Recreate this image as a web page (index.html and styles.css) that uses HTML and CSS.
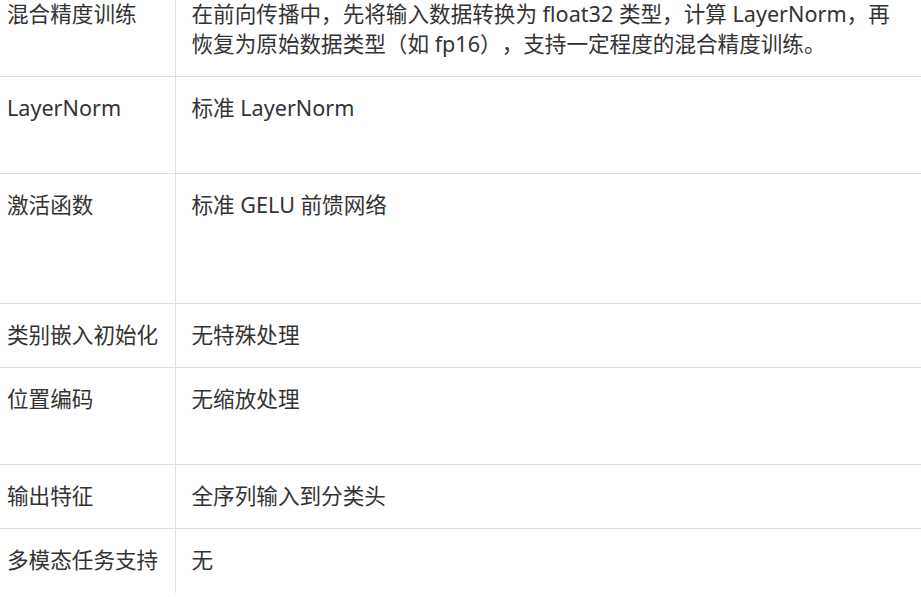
FILE: index.html
```html
<!DOCTYPE html>
<html lang="zh-CN">
<head>
  <meta charset="UTF-8" />
  <title>模型配置对比</title>
  <link rel="stylesheet" href="styles.css">
</head>
<body>
  <table class="spec-table">
    <colgroup>
      <col class="col-name">
      <col class="col-desc">
    </colgroup>
    <tbody>
      <tr class="row-tall">
        <td>混合精度训练</td>
        <td>在前向传播中，先将输入数据转换为 float32 类型，计算 LayerNorm，再恢复为原始数据类型（如 fp16），支持一定程度的混合精度训练。</td>
      </tr>
      <tr class="row-mid">
        <td>LayerNorm</td>
        <td>标准 LayerNorm</td>
      </tr>
      <tr class="row-high">
        <td>激活函数</td>
        <td>标准 GELU 前馈网络</td>
      </tr>
      <tr>
        <td>类别嵌入初始化</td>
        <td>无特殊处理</td>
      </tr>
      <tr class="row-mid">
        <td>位置编码</td>
        <td>无缩放处理</td>
      </tr>
      <tr>
        <td>输出特征</td>
        <td>全序列输入到分类头</td>
      </tr>
      <tr class="row-last">
        <td>多模态任务支持</td>
        <td>无</td>
      </tr>
    </tbody>
  </table>
</body>
</html>
```

FILE: styles.css
```css
body {
  margin: 0;
  padding: 0;
  background: #fff;
  color: #333;
  font-family: "Noto Sans", "Noto Sans CJK SC", sans-serif;
  font-size: 21.6px;
  line-height: 30px;
  text-spacing-trim: space-all;
}
.spec-table {
  width: 100%;
  margin-top: -17px;
  border-collapse: collapse;
}
.col-name {
  width: 175px;
}
.spec-table td {
  padding: 16px 16px 17px;
  vertical-align: top;
  border-bottom: 1px solid #dedede;
}
.spec-table td:first-child {
  padding-left: 7px;
  border-right: 1px solid #dedede;
}
.spec-table tr {
  height: 64px;
}
.spec-table tr.row-mid {
  height: 97px;
}
.spec-table tr.row-high {
  height: 130px;
}
.spec-table tr.row-last td {
  border-bottom: none;
}
```
